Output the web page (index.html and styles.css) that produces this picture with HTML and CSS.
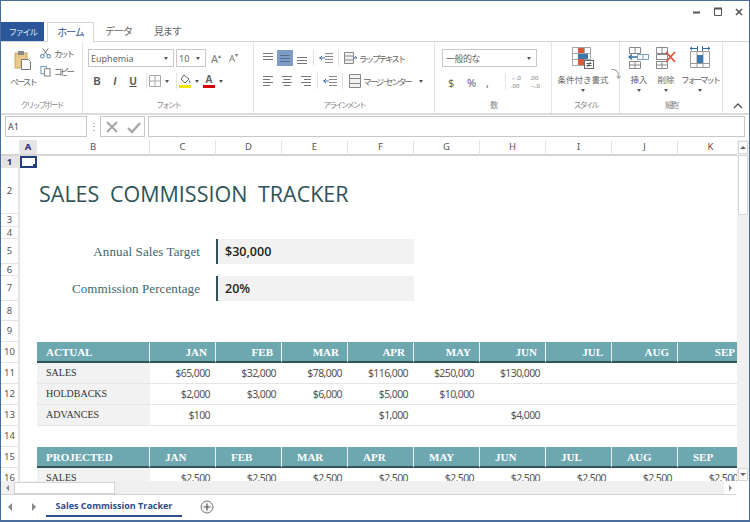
FILE: index.html
```html
<!DOCTYPE html>
<html lang="ja">
<head>
    <meta charset="UTF-8">
    <meta name="viewport" content="width=device-width, initial-scale=1.0">
    <title>Sales Commission Tracker</title>
    <link rel="stylesheet" href="styles.css">
</head>
<body>
<div class="window">

    <div class="titlebar">
        <svg width="64" height="12" viewBox="0 0 64 12">
            <path d="M11 6.500h7" stroke="#555" stroke-width="2"/>
            <path d="M32.500 2.500h7v7h-7z" fill="none" stroke="#555"/>
            <path d="M32 2.500h8" stroke="#555" stroke-width="2"/>
            <path d="M54 3l6 6M60 3l-6 6" stroke="#555" stroke-width="1.600"/>
        </svg>
    </div>

    <div class="tabs">
        <div class="tab-file">ファイル</div>
        <div class="tab-home">ホーム</div>
        <div class="tab tab-data">データ</div>
        <div class="tab tab-view">見ます</div>
    </div>

    <div class="ribbon">
        <div class="group g-clip">
            <div class="group-body clip-body">
                <div class="paste">
                    <svg width="18" height="22" viewBox="0 0 18 22">
                        <rect x="1" y="3" width="12" height="15" fill="#e8c98a" stroke="#c9a866"/>
                        <rect x="4" y="1" width="6" height="4" fill="#8a8a8a"/>
                        <path d="M7.500 9.500h7l2 2v8h-9z" fill="#fff" stroke="#777"/>
                    </svg>
                    <span>ペースト</span>
                </div>
                <div class="clip-side">
                    <div class="clip-item">
                        <svg width="11" height="12" viewBox="0 0 12 12"><path d="M3 1l5 7M9 1L4 8" stroke="#666" fill="none"/><circle cx="2.500" cy="9.500" r="2" fill="none" stroke="#3d6ea8"/><circle cx="9.500" cy="9.500" r="2" fill="none" stroke="#3d6ea8"/></svg>
                        <span>カット</span>
                    </div>
                    <div class="clip-item">
                        <svg width="11" height="12" viewBox="0 0 12 12"><rect x="1" y="1" width="6" height="8" fill="#fff" stroke="#6b8fb5"/><rect x="5" y="3.500" width="6" height="8" fill="#fff" stroke="#777"/></svg>
                        <span>コピー</span>
                    </div>
                </div>
            </div>
            <div class="group-label">クリップボード</div>
        </div>

        <div class="group g-font">
            <div class="group-body">
                <div class="row font-row1">
                    <div class="combo combo-font">Euphemia<i class="caret"></i></div>
                    <div class="combo combo-size">10<i class="caret"></i></div>
                    <span class="grow">A<sup>▴</sup></span>
                    <span class="grow shrink">A<sup>▾</sup></span>
                </div>
                <div class="row font-row2">
                    <b class="fmt">B</b>
                    <b class="fmt fmt-i">I</b>
                    <b class="fmt fmt-u">U</b>
                    <i class="vsep sep-a"></i>
                    <svg width="12" height="12" viewBox="0 0 12 12"><path d="M.5.5h11v11H.5zM6 .5v11M.5 6h11" fill="none" stroke="#a8a8a8"/></svg>
                    <i class="caret"></i>
                    <i class="vsep sep-b"></i>
                    <div class="swatch">
                        <svg width="12" height="10" viewBox="0 0 12 10"><path d="M5 1l5 4-4 4-4-4z" fill="#fff" stroke="#666"/><path d="M10.500 6l1 2.500h-2z" fill="#3d6ea8"/></svg>
                        <i class="bar bar-y"></i>
                    </div>
                    <i class="caret"></i>
                    <div class="swatch swatch-a">
                        <span>A</span>
                        <i class="bar bar-r"></i>
                    </div>
                    <i class="caret"></i>
                </div>
            </div>
            <div class="group-label">フォント</div>
        </div>

        <div class="group g-align">
            <div class="group-body">
                <div class="row align-row1">
                    <svg class="al" width="12" height="12" viewBox="0 0 12 12"><path d="M1 1.500h10M1 4.500h10M1 7.500h10" stroke="#777"/></svg>
                    <div class="al-on"><svg width="12" height="12" viewBox="0 0 12 12"><path d="M1 3.500h10M1 6.500h10M1 9.500h10" stroke="#56708f"/></svg></div>
                    <svg class="al" width="12" height="12" viewBox="0 0 12 12"><path d="M1 5.500h10M1 8.500h10M1 11.500h10" stroke="#777"/></svg>
                    <i class="vsep"></i>
                    <svg width="14" height="12" viewBox="0 0 14 12"><path d="M6 1.500h8M6 4.500h8M6 7.500h8M6 10.500h8" stroke="#888"/><path d="M0 6h6M3 4L1 6l2 2" stroke="#3d6ea8" fill="none"/></svg>
                    <i class="vsep"></i>
                    <svg width="14" height="14" viewBox="0 0 14 14"><path d="M.5 1.500h9v11h-9zM.5 5h9M.5 9h9" fill="#f2f2f2" stroke="#888"/><path d="M9 7h4l-2-2" fill="none" stroke="#3d6ea8"/></svg>
                    <span class="al-text">ラップテキスト</span>
                </div>
                <div class="row align-row2">
                    <svg class="al" width="12" height="12" viewBox="0 0 12 12"><path d="M1 1.500h10M1 4.500h7M1 7.500h10M1 10.500h7" stroke="#777"/></svg>
                    <svg class="al al-mid" width="12" height="12" viewBox="0 0 12 12"><path d="M1 1.500h10M2.500 4.500h7M1 7.500h10M2.500 10.500h7" stroke="#777"/></svg>
                    <svg class="al al-last" width="12" height="12" viewBox="0 0 12 12"><path d="M1 1.500h10M4 4.500h7M1 7.500h10M4 10.500h7" stroke="#777"/></svg>
                    <i class="vsep"></i>
                    <svg width="14" height="12" viewBox="0 0 14 12"><path d="M6 1.500h8M6 4.500h8M6 7.500h8M6 10.500h8" stroke="#888"/><path d="M0 6h6M3 4L1 6l2 2" stroke="#3d6ea8" fill="none"/></svg>
                    <i class="vsep"></i>
                    <svg width="14" height="14" viewBox="0 0 14 14"><path d="M1.500.5h11v13h-11zM1.500 4.500h11M1.500 9.500h11" fill="#f2f2f2" stroke="#888"/></svg>
                    <span class="al-text">マージ·センター</span>
                    <i class="caret caret-merge"></i>
                </div>
            </div>
            <div class="group-label">アラインメント</div>
        </div>

        <div class="group g-num">
            <div class="group-body">
                <div class="combo combo-num">一般的な<i class="caret"></i></div>
                <div class="row num-row">
                    <span class="sym">$</span>
                    <span class="sym">%</span>
                    <span class="sym">,</span>
                    <i class="vsep"></i>
                    <span class="dec"><em>←</em>.0<br>.00</span>
                    <span class="dec">.00<br><em>→</em>.0</span>
                </div>
            </div>
            <div class="group-label">数</div>
        </div>

        <div class="group g-style">
            <div class="group-body big-body">
                <div class="big">
                    <svg width="24" height="24" viewBox="0 0 24 24">
                        <path d="M1.500 1.500h18v18h-18zM7.500 1.500v18M13.500 1.500v18M1.500 7.500h18M1.500 13.500h18" fill="#fff" stroke="#a5a5a5"/>
                        <path d="M7 2h6v5H7zM7 13h6v6H7z" fill="#d9573a"/>
                        <path d="M7 8h10v5H7z" fill="#3c77ad"/>
                        <rect x="13.500" y="14.500" width="9" height="8" fill="#fff" stroke="#666"/>
                        <path d="M15.500 17.500h5M15.500 19.500h5M19.500 16l-3 5" stroke="#555" fill="none"/>
                    </svg>
                    <span>条件付き書式</span>
                    <i class="caret"></i>
                </div>
                <span class="odd">⤵</span>
            </div>
            <div class="group-label">スタイル</div>
        </div>

        <div class="group g-cells">
            <div class="group-body big-body">
                <div class="big big-ins">
                    <svg width="22" height="24" viewBox="0 0 22 24">
                        <path d="M1.500 1.500h11v6h-11zM7 1.500v6M1.500 15.500h11v7h-11zM7 15.500v7M1.500 19h11" fill="#fff" stroke="#888"/>
                        <path d="M9.500 8.500h11v5h-11zM15 8.500v5" fill="#fff" stroke="#7a9bbd"/>
                        <path d="M1 11h8M4 8.500L1 11l3 2.500" fill="none" stroke="#2f6eaa" stroke-width="1.300"/>
                    </svg>
                    <span>挿入</span>
                    <i class="caret"></i>
                </div>
                <div class="big big-del">
                    <svg width="22" height="24" viewBox="0 0 22 24">
                        <path d="M1.500 1.500h11v6h-11zM7 1.500v6M1.500 15.500h11v7h-11zM7 15.500v7M1.500 19h11M1.500 8.500h11v5h-11z" fill="#fff" stroke="#888"/>
                        <path d="M11 6l9 10M20 6l-9 10" stroke="#d9573a" stroke-width="1.800"/>
                    </svg>
                    <span>削除</span>
                    <i class="caret"></i>
                </div>
                <div class="big big-fmt">
                    <svg width="22" height="24" viewBox="0 0 22 24">
                        <path d="M1.500 5.500h19v16h-19zM1.500 17.500h19M8 5.500v16M14 5.500v16" fill="#fff" stroke="#999"/>
                        <path d="M8 9h6v8H8z" fill="#3c77ad"/>
                        <path d="M1 2.500h8M13 2.500h8M3 1L1 2.500 3 4M19 1l2 1.500L19 4M8.500 0v5M13.500 0v5" fill="none" stroke="#2f6eaa"/>
                    </svg>
                    <span class="narrow">フォーマット</span>
                    <i class="caret"></i>
                </div>
            </div>
            <div class="group-label">細胞</div>
        </div>

        <div class="collapse">
            <svg width="10" height="6" viewBox="0 0 10 6"><path d="M1 5l4-4 4 4" fill="none" stroke="#555" stroke-width="1.400"/></svg>
        </div>
    </div>

    <div class="formula">
        <div class="namebox">A1</div>
        <div class="dots">⋮</div>
        <div class="fx-btns">
            <svg width="16" height="14" viewBox="0 0 16 14"><path d="M3 2l10 10M13 2L3 12" stroke="#a8a8a8" stroke-width="2"/></svg>
            <svg width="16" height="14" viewBox="0 0 16 14"><path d="M2 8l4 4 8-9" fill="none" stroke="#a8a8a8" stroke-width="2.400"/></svg>
        </div>
        <div class="fx-input"></div>
    </div>

    <div class="sheet-area">
        <div class="sheet">
            <table class="grid">
                <colgroup>
                    <col class="c-hd"><col class="c-a"><col class="c-b">
                    <col class="c-m"><col class="c-m"><col class="c-m"><col class="c-m"><col class="c-m"><col class="c-m"><col class="c-m"><col class="c-m"><col class="c-m">
                </colgroup>
                <tr class="r-head">
                    <th></th><th class="on">A</th><th>B</th><th>C</th><th>D</th><th>E</th><th>F</th><th>G</th><th>H</th><th>I</th><th>J</th><th>K</th>
                </tr>
                <tr class="r1"><th class="rh on">1</th><td class="sel"></td><td colspan="10"></td></tr>
                <tr class="r2"><th class="rh">2</th><td></td><td colspan="10" class="title">SALES COMMISSION TRACKER</td></tr>
                <tr class="r3"><th class="rh">3</th><td colspan="11"></td></tr>
                <tr class="r4"><th class="rh">4</th><td colspan="11"></td></tr>
                <tr class="r5"><th class="rh">5</th><td></td><td class="lbl" colspan="2">Annual Sales Target</td><td class="val" colspan="3">$30,000</td><td colspan="6"></td></tr>
                <tr class="r6"><th class="rh">6</th><td colspan="11"></td></tr>
                <tr class="r5"><th class="rh">7</th><td></td><td class="lbl" colspan="2">Commission Percentage</td><td class="val" colspan="3">20%</td><td colspan="6"></td></tr>
                <tr class="r8"><th class="rh">8</th><td colspan="11"></td></tr>
                <tr class="r11"><th class="rh">9</th><td colspan="11"></td></tr>
                <tr class="r11 band">
                    <th class="rh">10</th><td class="blank"></td><td class="bh">ACTUAL</td>
                    <td class="mh">JAN</td><td class="mh">FEB</td><td class="mh">MAR</td><td class="mh">APR</td><td class="mh">MAY</td><td class="mh">JUN</td><td class="mh">JUL</td><td class="mh">AUG</td><td class="mh">SEP</td>
                </tr>
                <tr class="r11 data">
                    <th class="rh">11</th><td class="blank"></td><td class="nm">SALES</td>
                    <td>$65,000</td><td>$32,000</td><td>$78,000</td><td>$116,000</td><td>$250,000</td><td>$130,000</td><td></td><td></td><td></td>
                </tr>
                <tr class="r11 data">
                    <th class="rh">12</th><td class="blank"></td><td class="nm">HOLDBACKS</td>
                    <td>$2,000</td><td>$3,000</td><td>$6,000</td><td>$5,000</td><td>$10,000</td><td></td><td></td><td></td><td></td>
                </tr>
                <tr class="r11 data">
                    <th class="rh">13</th><td class="blank"></td><td class="nm">ADVANCES</td>
                    <td>$100</td><td></td><td></td><td>$1,000</td><td></td><td>$4,000</td><td></td><td></td><td></td>
                </tr>
                <tr class="r11"><th class="rh">14</th><td colspan="11"></td></tr>
                <tr class="r11 band proj">
                    <th class="rh">15</th><td class="blank"></td><td class="bh">PROJECTED</td>
                    <td class="mh">JAN</td><td class="mh">FEB</td><td class="mh">MAR</td><td class="mh">APR</td><td class="mh">MAY</td><td class="mh">JUN</td><td class="mh">JUL</td><td class="mh">AUG</td><td class="mh">SEP</td>
                </tr>
                <tr class="r11 data">
                    <th class="rh">16</th><td class="blank"></td><td class="nm">SALES</td>
                    <td>$2,500</td><td>$2,500</td><td>$2,500</td><td>$2,500</td><td>$2,500</td><td>$2,500</td><td>$2,500</td><td>$2,500</td><td>$2,500</td>
                </tr>
            </table>
        </div>
        <div class="vscroll">
            <div class="sb-btn"><i class="tri-up"></i></div>
            <div class="vthumb"></div>
            <div class="sb-fill"></div>
            <div class="sb-btn"><i class="tri-down"></i></div>
        </div>
    </div>

    <div class="hscroll">
        <div class="hs-left"><i class="tri-left"></i></div>
        <div class="hthumb"></div>
        <div class="sb-fill"></div>
        <div class="hs-right"><i class="tri-right"></i></div>
    </div>

    <div class="sheetbar">
        <i class="tri-left nav"></i>
        <i class="tri-right nav"></i>
        <div class="sheet-tab">Sales Commission Tracker</div>
        <svg class="add" width="14" height="14" viewBox="0 0 14 14"><circle cx="7" cy="7" r="6" fill="#f4f4f4" stroke="#777"/><path d="M7 3.500v7M3.500 7h7" stroke="#555" stroke-width="1.200"/></svg>
    </div>
</div>
</body>
</html>
```

FILE: styles.css
```css
* {
    box-sizing: border-box;
}
html, body {
    margin: 0;
    height: 100%;
    overflow: hidden;
}
body {
    font-family: "Noto Sans CJK JP", "Noto Sans", sans-serif;
    background-color: #fff;
    color: #555;
}
i, em {
    font-style: normal;
}
svg {
    display: block;
    flex: none;
}
.window {
    width: 750px;
    height: 522px;
    border: 1px solid #4a6c9b;
    border-bottom-width: 2px;
    display: flex;
    flex-direction: column;
}

/* title + tabs */
.titlebar {
    height: 21px;
    display: flex;
    justify-content: flex-end;
    align-items: flex-end;
    padding: 0 3px 4px 0;
}
.tabs {
    height: 20px;
    display: flex;
    border-bottom: 1px solid #d6d6d6;
    font-size: 10px;
}
.tab-file {
    width: 43px;
    height: 19px;
    background-color: #2b579a;
    color: #dfe7f2;
    text-align: center;
    line-height: 19px;
    font-size: 8.500px;
    letter-spacing: -1.500px;
}
.tab-home {
    width: 47px;
    height: 20px;
    margin-left: 3px;
    background-color: #fff;
    border: 1px solid #d6d6d6;
    border-bottom: none;
    color: #2b579a;
    text-align: center;
    line-height: 18px;
    letter-spacing: -1px;
}
.tab {
    line-height: 18px;
    color: #666;
    letter-spacing: -1px;
}
.tab-data {
    margin-left: 11px;
}
.tab-view {
    margin-left: 22px;
}

/* ribbon */
.ribbon {
    height: 73px;
    display: flex;
    border-bottom: 2px solid #dcdcdc;
    flex: none;
}
.group {
    border-right: 1px solid #e4e4e4;
    display: flex;
    flex-direction: column;
    height: 71px;
}
.group-body {
    height: 56px;
    padding-top: 7px;
}
.group-label {
    font-size: 8px;
    color: #888;
    text-align: center;
    line-height: 12px;
    margin-top: 1px;
    letter-spacing: -2px;
}
.g-clip { width: 82px; }
.g-font { width: 171px; }
.g-align { width: 181px; }
.g-num { width: 117px; }
.g-style { width: 68px; }
.g-cells { width: 103px; }
.row {
    display: flex;
    align-items: center;
}
.caret {
    display: inline-block;
    width: 0;
    height: 0;
    border: 2px solid transparent;
    border-top: 3px solid #555;
    border-bottom: none;
    flex: none;
}
.vsep {
    width: 1px;
    height: 16px;
    background-color: #e2e2e2;
    flex: none;
}

.clip-body {
    display: flex;
    padding: 2px 0 0 8px;
}
.paste {
    width: 28px;
    margin-top: 6px;
    display: flex;
    flex-direction: column;
    align-items: center;
    font-size: 8.500px;
    color: #666;
    line-height: 12px;
}
.paste span {
    margin-top: 3px;
    white-space: nowrap;
    letter-spacing: -2px;
}
.clip-side {
    margin-left: 3px;
}
.clip-item {
    display: flex;
    align-items: center;
    gap: 3px;
    font-size: 8.500px;
    letter-spacing: -2.200px;
    height: 18px;
    color: #666;
}
.combo {
    height: 18px;
    border: 1px solid #c8c8c8;
    background-color: #fff;
    display: flex;
    align-items: center;
    justify-content: space-between;
    padding: 0 5px 0 2px;
    font-family: "Noto Sans", sans-serif;
    font-size: 9px;
    color: #666;
}
.font-row1 {
    padding-left: 5px;
}
.combo-font {
    width: 86px;
}
.combo-size {
    width: 30px;
    margin-left: 2px;
}
.grow {
    font-family: "Noto Sans", sans-serif;
    font-size: 11px;
    margin-left: 5px;
    width: 13px;
    white-space: nowrap;
    color: #777;
}
.shrink {
    font-size: 9.500px;
    margin-left: 5px;
}
.grow sup {
    font-size: 6px;
    line-height: 0;
    vertical-align: 5px;
}
.font-row2 {
    padding-left: 5px;
    margin-top: 6px;
    height: 16px;
}
.fmt {
    width: 18px;
    text-align: center;
    font-family: "Liberation Sans", sans-serif;
    font-size: 10px;
    color: #555;
}
.fmt-i {
    font-style: italic;
}
.fmt-u {
    text-decoration: underline;
}
.font-row2 .caret {
    margin-left: 4px;
}
.sep-a {
    margin: 0 2px 0 4px;
}
.sep-b {
    margin-left: 7px;
}
.swatch {
    width: 12px;
    margin-left: 2px;
    display: flex;
    flex-direction: column;
    align-items: center;
}
.swatch-a {
    margin-left: 4px;
    font-family: "Noto Sans", sans-serif;
    font-size: 10px;
    line-height: 11px;
    font-weight: 700;
    color: #666;
}
.bar {
    width: 12px;
    height: 3px;
    margin-top: 1px;
}
.bar-y {
    background-color: #f5e800;
}
.bar-r {
    margin-top: 0;
    background-color: #d80000;
}

.align-row1, .align-row2 {
    padding-left: 8px;
    height: 18px;
    color: #666;
}
.align-row2 {
    margin-top: 5px;
}
.al-on {
    width: 16px;
    height: 16px;
    margin: 0 3px 0 3px;
    background-color: #7f9cc4;
    display: flex;
    align-items: center;
    justify-content: center;
}
.al-mid {
    margin: 0 7px;
}
.al-last {
    margin-right: 0;
}
.align-row1 .vsep, .align-row2 .vsep {
    margin: 0 5px;
}
.al-text {
    margin-left: 1px;
    white-space: nowrap;
    letter-spacing: -2px;
    font-size: 8.500px;
}
.caret-merge {
    margin-left: 8px;
}

.g-num .group-body {
    padding-left: 7px;
}
.combo-num {
    width: 95px;
    font-family: "Noto Sans CJK JP", sans-serif;
    padding-left: 3px;
    letter-spacing: -.5px;
}
.num-row {
    margin-top: 6px;
    height: 18px;
    padding-left: 6px;
}
.sym {
    width: 19px;
    font-family: "Noto Sans", sans-serif;
    font-size: 11px;
    color: #666;
    text-align: left;
}
.num-row .vsep {
    margin-right: 5px;
}
.dec {
    width: 19px;
    font-family: "Noto Sans", sans-serif;
    font-size: 6px;
    line-height: 8px;
    color: #777;
    white-space: nowrap;
}
.dec em {
    color: #3d6ea8;
    letter-spacing: -1px;
}

.big-body {
    display: flex;
    padding-top: 4px;
}
.big {
    display: flex;
    flex-direction: column;
    align-items: center;
    font-size: 8.500px;
    line-height: 12px;
    color: #666;
    white-space: nowrap;
}
.big span {
    margin-top: 3px;
}
.big .narrow {
    letter-spacing: -2.200px;
}
.big .caret {
    margin-top: 4px;
}
.g-style .big {
    width: 50px;
    margin-left: 6px;
}
.odd {
    font-size: 10px;
    margin: 22px 0 0 3px;
    color: #888;
    line-height: 12px;
}
.big-ins {
    width: 22px;
    margin-left: 8px;
}
.big-del {
    width: 22px;
    margin-left: 5px;
}
.big-fmt {
    width: 36px;
    margin-left: 5px;
}
.collapse {
    margin: 61px 0 0 10px;
}

/* formula bar */
.formula {
    height: 25px;
    display: flex;
    align-items: flex-start;
    padding: 1px 4px 0 4px;
    flex: none;
}
.namebox {
    width: 82px;
    height: 21px;
    border: 1px solid #c8c8c8;
    font-family: "Noto Sans", sans-serif;
    font-size: 9px;
    line-height: 19px;
    padding-left: 2px;
    color: #444;
}
.dots {
    width: 13px;
    text-align: center;
    font-size: 10px;
    line-height: 20px;
    color: #888;
}
.fx-btns {
    width: 45px;
    height: 21px;
    border: 1px solid #c8c8c8;
    display: flex;
    align-items: center;
    justify-content: center;
    gap: 6px;
}
.fx-input {
    flex: 1;
    height: 21px;
    margin-left: 3px;
    border: 1px solid #c8c8c8;
}

/* sheet */
.sheet-area {
    display: flex;
    height: 341px;
    flex: none;
}
.sheet {
    width: 736px;
    overflow: hidden;
}
.grid {
    border-collapse: separate;
    border-spacing: 0;
    table-layout: fixed;
    width: 742px;
    font-family: "Noto Sans", sans-serif;
}
.c-hd { width: 19px; }
.c-a { width: 17px; }
.c-b { width: 113px; }
.c-m { width: 66px; }
.grid td, .grid th {
    padding: 0;
    overflow: hidden;
    white-space: nowrap;
    line-height: 10px;
}
.r-head th {
    height: 16px;
    font-size: 9.500px;
    font-weight: 400;
    color: #555;
    border-right: 1px solid #e4e4e4;
    border-bottom: 2px solid #d4d4d4;
}
.r-head th.on {
    background-color: #e4e4e4;
    color: #2b2b80;
    font-weight: 700;
}
.grid .rh {
    font-size: 9.500px;
    font-weight: 400;
    color: #555;
    border-right: 2px solid #e4e4e4;
    border-bottom: 1px solid #e4e4e4;
}
.grid .rh.on {
    background-color: #e4e4e4;
    color: #2b2b80;
    font-weight: 700;
}
.sel {
    position: relative;
    box-shadow: inset 0 0 0 2px #23407a;
}
.sel::after {
    content: "";
    position: absolute;
    right: 0;
    bottom: 0;
    width: 4px;
    height: 4px;
    background-color: #23407a;
}
.r1 { height: 12px; }
.r2 { height: 46px; }
.r3 { height: 13px; }
.r4 { height: 12px; }
.r5 { height: 25px; }
.r6 { height: 12px; }
.r8 { height: 20px; }
.r11 { height: 21px; }
.grid .title {
    font-size: 21.500px;
    font-family: "Open Sans", sans-serif;
    color: #2f5459;
    word-spacing: 5px;
    line-height: 30px;
    padding: 6px 0 0 2px;
}
.grid .lbl {
    font-family: "Liberation Serif", serif;
    font-size: 13px;
    letter-spacing: .1px;
    line-height: 16px;
    color: #3d6668;
    text-align: right;
    padding-right: 16px;
}
.grid .val {
    background-color: #f2f2f2;
    border-left: 2px solid #2f5459;
    font-family: "Open Sans", sans-serif;
    font-size: 12.500px;
    line-height: 16px;
    font-weight: 600;
    color: #222;
    padding-left: 7px;
}
.band td {
    background-color: #6da7b0;
    color: #fff;
    font-family: "Liberation Serif", serif;
    font-size: 11px;
    font-weight: 700;
    border-right: 1px solid #e9f2f3;
    border-bottom: 2px solid #2f5459;
}
.band td.blank {
    background-color: #fff;
    border: none;
}
.grid .bh {
    padding-left: 9px;
}
.grid .mh {
    text-align: right;
    padding-right: 8px;
}
.grid .proj .mh {
    text-align: left;
    padding-left: 15px;
    padding-right: 0;
}
.grid .data td {
    border-bottom: 1px solid #e6e6e6;
    font-size: 10.500px;
    letter-spacing: -.6px;
    line-height: 14px;
    color: #555;
    text-align: right;
    padding-right: 6px;
}
.grid .data td.blank {
    border: none;
}
.grid .data td.nm {
    background-color: #f2f2f2;
    font-family: "Liberation Serif", serif;
    font-size: 10px;
    letter-spacing: 0;
    color: #333;
    text-align: left;
    padding-left: 9px;
}

/* scrollbars */
.vscroll {
    flex: 1;
    display: flex;
    flex-direction: column;
    background-color: #f0f0f0;
    padding: 1px 1px 0 1px;
}
.sb-btn {
    height: 13px;
    background-color: #fff;
    border: 1px solid #d8d8d8;
    display: flex;
    align-items: center;
    justify-content: center;
    flex: none;
}
.vthumb {
    height: 60px;
    margin-top: 1px;
    background-color: #fff;
    border: 1px solid #d8d8d8;
    flex: none;
}
.sb-fill {
    flex: 1;
}
.tri-up, .tri-down, .tri-left, .tri-right {
    display: block;
    width: 0;
    height: 0;
    border: 3px solid transparent;
    flex: none;
}
.tri-up {
    border-top: none;
    border-bottom-color: #666;
}
.tri-down {
    border-bottom: none;
    border-top-color: #666;
}
.tri-left {
    border-left: none;
    border-right-color: #888;
}
.tri-right {
    border-right: none;
    border-left-color: #888;
}
.hscroll {
    height: 14px;
    display: flex;
    align-items: center;
    background-color: #f0f0f0;
    border-bottom: 1px solid #d4d4d4;
    margin-right: 13px;
    flex: none;
}
.hs-left {
    width: 13px;
    display: flex;
    justify-content: center;
}
.hthumb {
    width: 101px;
    height: 12px;
    background-color: #fff;
    border: 1px solid #d4d4d4;
}
.hs-right {
    width: 12px;
    height: 13px;
    background-color: #fff;
    display: flex;
    align-items: center;
    justify-content: center;
}
.sheetbar {
    flex: 1;
    display: flex;
    align-items: flex-start;
}
.sheetbar .nav {
    margin-top: 8px;
    border-width: 4px;
}
.sheetbar .tri-left {
    margin-left: 7px;
    border-left: none;
}
.sheetbar .tri-right {
    margin-left: 20px;
    border-right: none;
}
.sheet-tab {
    width: 136px;
    height: 22px;
    margin-left: 10px;
    border-bottom: 2px solid #2f4f8f;
    font-family: "Open Sans", sans-serif;
    font-size: 9px;
    font-weight: 700;
    color: #2f4a8a;
    text-align: center;
    line-height: 22px;
    white-space: nowrap;
}
.add {
    margin: 5px 0 0 18px;
}
```
